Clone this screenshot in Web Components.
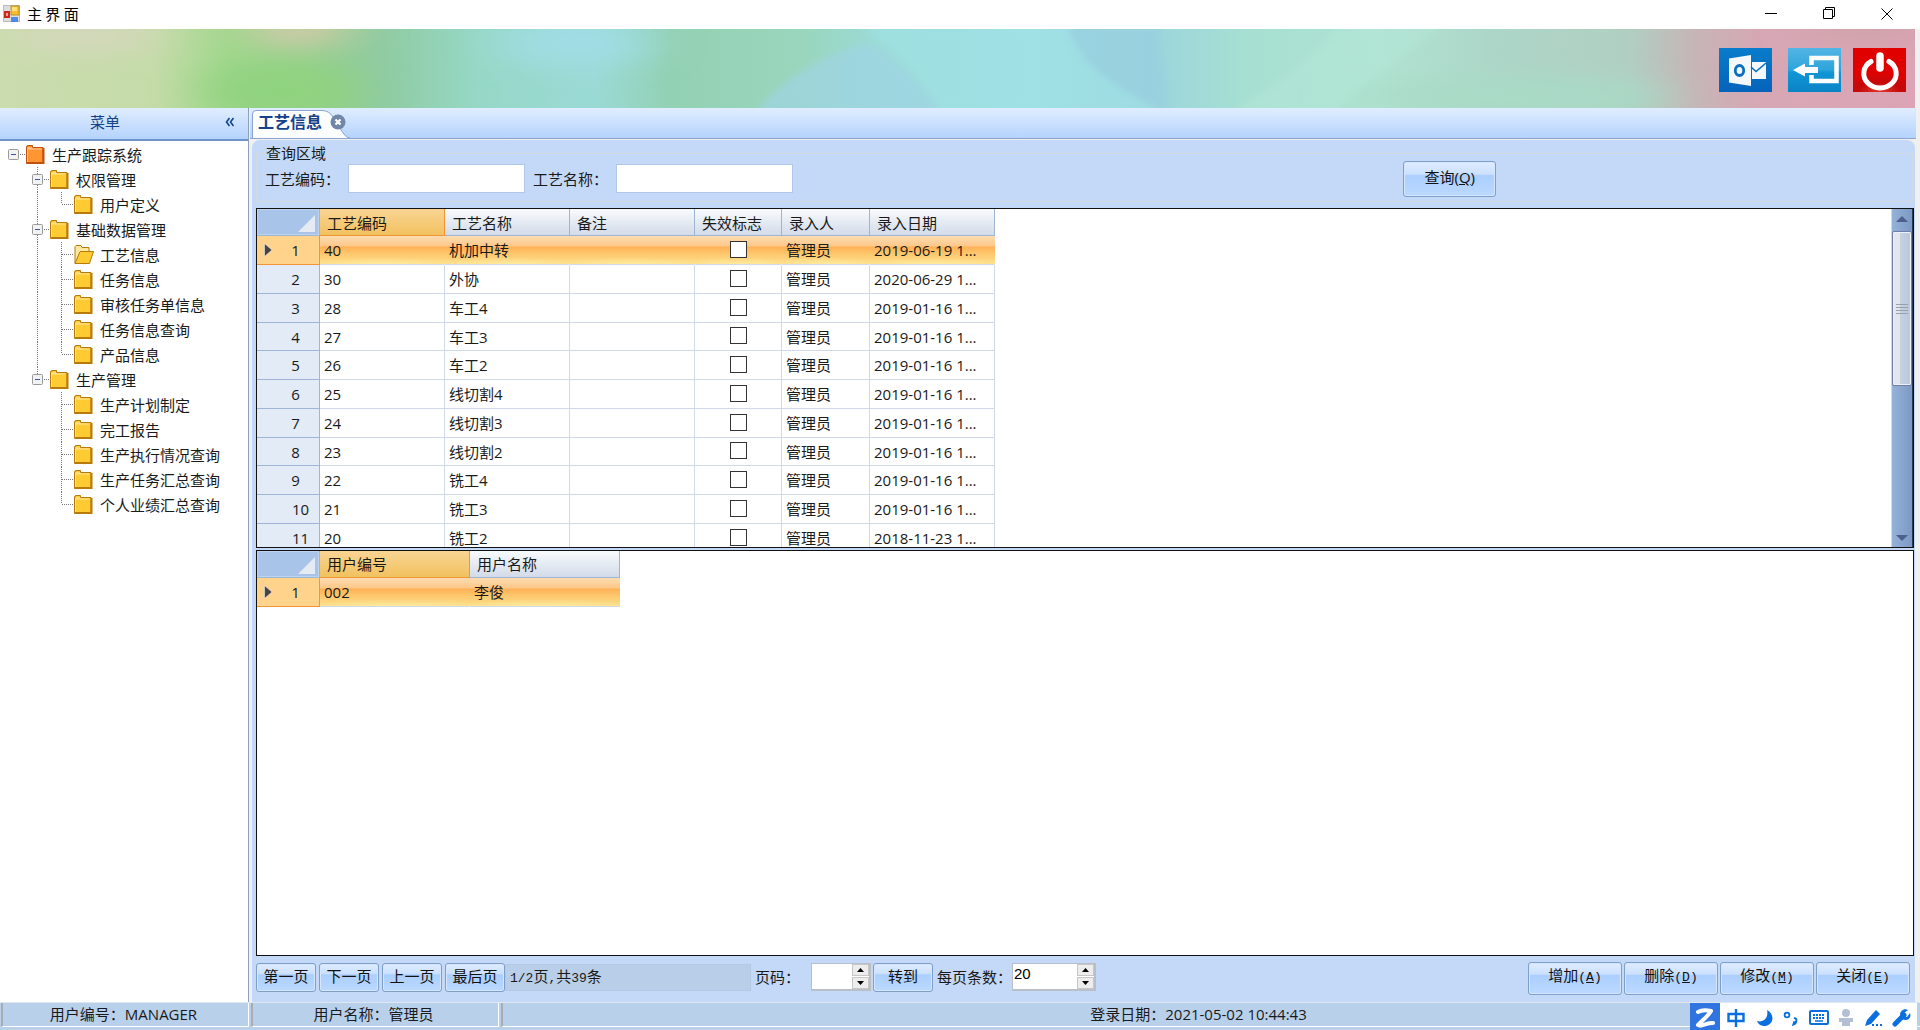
<!DOCTYPE html>
<html lang="zh-CN">
<head>
<meta charset="utf-8">
<title>主界面</title>
<style>
html, body { height: 100%; margin: 0; }
body {
  font: 15px/20px "Open Sans", "Noto Sans CJK SC", sans-serif;
  color: #1a1a1a;
  --panel: #c3d9f7;
  --status: #b9d0ea;
  --ink: #15428b;
}
</style>
</head>
<body>
<main-window></main-window>

<script>
const define = (name, html, setup) => {
  const tpl = document.createElement('template');
  tpl.innerHTML = '<style>*{box-sizing:border-box}:host([hidden]){display:none}</style>' + html;
  customElements.define(name, class extends HTMLElement {
    connectedCallback() {
      if (this.shadowRoot) return;
      this.attachShadow({ mode: 'open' }).append(tpl.content.cloneNode(true));
      if (setup) setup(this, this.shadowRoot);
    }
  });
};

define('title-bar', `
<style>
:host { display: flex; align-items: center; height: 29px; background: #fff; color: #000; flex: none; padding-bottom: 2px; box-sizing: border-box; }
svg { display: block; }
.logo { margin: 0 6px 0 3px; }
span { flex: 1; font-family: "Noto Sans CJK SC", sans-serif; }
button { width: 58px; height: 27px; padding: 0; border: 0; background: none; display: grid; place-items: center; }
.ctl { display: flex; padding-right: 4px; }
</style>
<svg class="logo" width="18" height="18" viewBox="0 0 18 18">
  <rect x=".5" y=".5" width="16" height="16" fill="#ddd" stroke="#bbb"/>
  <rect x="1" y="6" width="6" height="7" fill="#c62a1c"/><rect x="3" y="8" width="2" height="3" fill="#f6a48f"/>
  <rect x="8" y="1" width="8" height="9" fill="#f5c02a" stroke="#b88411" stroke-width=".8"/><rect x="9" y="2" width="5" height="4" fill="#ffe27a"/>
  <rect x="8" y="12" width="7" height="5" fill="#4f8ae6"/>
</svg>
<span>主 界 面</span>
<div class="ctl">
  <button aria-label="最小化"><svg width="12" height="12"><path d="M0 5.500h12" stroke="#000"/></svg></button>
  <button aria-label="还原"><svg width="13" height="13" fill="none" stroke="#000"><path d="M.5 2.500h9v9h-9zM2.500 2.500v-2h9v9h-2"/></svg></button>
  <button aria-label="关闭"><svg width="12" height="12" stroke="#000"><path d="M.5.5l11 11M11.500.5l-11 11"/></svg></button>
</div>`);

define('app-banner', `
<style>
:host { display: grid; height: 79px; margin-right: 5px; flex: none; overflow: hidden; }
:host > * { grid-area: 1 / 1; }
.bg { grid-area: 1 / 1; width: 100%; height: 79px; display: block; }
nav { grid-area: 1 / 1; z-index: 1; display: flex; justify-content: flex-end; align-items: center; padding: 2px 9px 0 0; }
button { padding: 0; border: 0; background: none; display: block; width: 53px; height: 44px; }
button + button { margin-left: 12px; }
.first { margin-right: 4px; }
button svg { display: block; width: 53px; height: 44px; }
</style>
<svg class="bg" viewBox="0 0 1568 79" preserveAspectRatio="none">
  <defs>
    <linearGradient id="b">
      <stop offset="0" stop-color="#cbdcae"/><stop offset=".08" stop-color="#c5dba9"/>
      <stop offset=".12" stop-color="#a0d78c"/><stop offset=".17" stop-color="#92ce92"/>
      <stop offset=".2" stop-color="#8fcba2"/><stop offset=".25" stop-color="#96d8c6"/>
      <stop offset=".31" stop-color="#9adad6"/><stop offset=".35" stop-color="#93d1b4"/>
      <stop offset=".42" stop-color="#99d6bd"/><stop offset=".46" stop-color="#9cdbd8"/>
      <stop offset=".54" stop-color="#9ee0e4"/><stop offset=".6" stop-color="#9bd5dd"/>
      <stop offset=".65" stop-color="#a6dfd2"/><stop offset=".72" stop-color="#b0e3d2"/>
      <stop offset=".78" stop-color="#add6c8"/><stop offset=".85" stop-color="#b0cfc2"/>
      <stop offset=".885" stop-color="#c6b5b6"/><stop offset=".92" stop-color="#d7a7b4"/>
      <stop offset="1" stop-color="#dca4b6"/>
    </linearGradient>
    <filter id="s" x="-80%" y="-80%" width="260%" height="260%"><feGaussianBlur stdDeviation="22 12"/></filter>
    <filter id="t" x="-10%" y="-10%" width="120%" height="120%"><feGaussianBlur stdDeviation="3"/></filter>
  </defs>
  <rect width="1568" height="79" fill="url(#b)"/>
  <g filter="url(#s)">
    <ellipse cx="245" cy="0" rx="42" ry="18" fill="#d2cba8"/>
    <ellipse cx="70" cy="6" rx="60" ry="18" fill="#d4d8bc"/>
    <ellipse cx="230" cy="62" rx="60" ry="30" fill="#90d37f"/>
    <ellipse cx="470" cy="14" rx="60" ry="24" fill="#a0dde4"/>
    <ellipse cx="1240" cy="68" rx="130" ry="18" fill="#a8dbc6"/>
    <ellipse cx="1530" cy="0" rx="50" ry="8" fill="#c8a0a0"/>
  </g>
  <g filter="url(#t)">
    <path d="M620 82C640 50 675 25 710 14C735 30 755 55 770 82z" fill="#9dd4e2" opacity=".75"/>
    <path d="M705 -3C730 20 755 45 770 82H950C915 60 885 35 875 -3z" fill="#a0e1e5" opacity=".55"/>
    <path d="M875 -3C880 35 920 65 955 82C960 45 945 20 950 -3z" fill="#98cfdf" opacity=".75"/>
    <path d="M1010 82C1050 50 1080 25 1095 -3H1180C1155 25 1110 55 1095 82z" fill="#b3e8d8" opacity=".5"/>
  </g>
</svg>
<nav>
  <button class="first" aria-label="邮件"><svg viewBox="0 0 53 44">
    <defs><linearGradient id="o" x2="0" y2="1"><stop stop-color="#087cca"/><stop offset="1" stop-color="#0563bb"/></linearGradient></defs>
    <rect width="53" height="44" fill="url(#o)"/>
    <path d="M10 10.500l22-3.500v31l-22-3.500z" fill="#f4f8fc"/><ellipse cx="20.500" cy="22.500" rx="4.200" ry="5" fill="none" stroke="#0a6fc2" stroke-width="2.800"/>
    <path d="M33 14h14v17H33z" fill="#f4f8fc"/><path d="M32 19l5 4.500L47 15" fill="none" stroke="#0a6fc2" stroke-width="1.600"/>
  </svg></button>
  <button aria-label="注销"><svg viewBox="0 0 53 44">
    <defs><linearGradient id="e" x2="0" y2="1"><stop stop-color="#53b5e4"/><stop offset=".5" stop-color="#2da4dc"/><stop offset=".55" stop-color="#1196d6"/><stop offset="1" stop-color="#0a83c6"/></linearGradient></defs>
    <rect width="53" height="44" fill="url(#e)"/>
    <path d="M23.500 17V10h25v23h-25V27" fill="none" stroke="#fff" stroke-width="4.500"/>
    <path d="M5 22l12-6.500v3.500h13v6H17v3.500z" fill="#fff"/>
  </svg></button>
  <button aria-label="退出"><svg viewBox="0 0 53 44">
    <defs><radialGradient id="p" cx=".5" cy=".9" r=".8"><stop stop-color="#e03a2c"/><stop offset=".5" stop-color="#c40808"/><stop offset="1" stop-color="#d90505"/></radialGradient></defs>
    <rect width="53" height="44" fill="#e00000"/><path d="M0 30Q26 20 53 30V44H0z" fill="url(#p)"/>
    <path d="M18 13.500A16.200 14.500 0 1 0 36 13.500" fill="none" stroke="#fff" stroke-width="5" stroke-linecap="round"/>
    <path d="M27 8v12" stroke="#fff" stroke-width="7.500" stroke-linecap="round"/>
  </svg></button>
</nav>`);

define('tree-item', `
<style>
:host { display: flex; align-items: center; height: 25px; padding-left: 2px; white-space: nowrap; }
svg { display: block; flex: none; }
a { color: inherit; text-decoration: none; padding-left: 6px; }
.g { display: flex; }
</style><div class="g"></div><a href="#"><slot></slot></a>`, (host, root) => {
  const dot = d => `<path d="${d}" stroke="#777" stroke-dasharray="1 1"/>`;
  const cells = {
    ' ': '',
    'v': dot('M11.5 0V25'),
    't': dot('M11.5 0V25M12 12.5H24'),
    'l': dot('M11.5 0V12M12 12.5H24'),
    'R': dot('M18 12.5H24') + 'B',
    'B': dot('M11.5 0V25M18 12.5H24') + 'B',
    'E': dot('M11.5 0V8M18 12.5H24') + 'B'
  };
  const box = '<rect x="6.5" y="7.5" width="10" height="10" rx="1" fill="#f2f2f2" stroke="#9a9a9a"/><path d="M9 12.5h5" stroke="#3b55a5"/>';
  const svg = [...host.getAttribute('lines')].map(c =>
    `<svg width="24" height="25" fill="none">${cells[c].replace('B', box)}</svg>`).join('');
  const kind = host.getAttribute('icon');
  const [fill, edge] = kind === 'root' ? ['#ff9633', '#c04f10'] : ['#ffcb33', '#b87a0c'];
  const folder = kind === 'open'
    ? `<path d="M1 19.500V2.500l1-1h5l1 2h7v4" fill="#ffe9a0" stroke="${edge}"/><path d="M1 19.500l5-12h13.500l-4 12z" fill="${fill}" stroke="${edge}"/>`
    : `<path d="M.5 19.500v-17h1v-1h5v2h10.500v16z" fill="${fill}" stroke="${edge}"/><path d="M1.500 4h5M1.500 18V5h14" fill="none" stroke="#fff" opacity=".5"/><path d="M1 19h16.500V4" fill="none" stroke="${edge}" stroke-width="2"/>`;
  root.querySelector('.g').innerHTML = svg + `<svg width="20" height="25" viewBox="0 -2 20 25">${folder}</svg>`;
});

define('side-menu', `
<style>
:host { display: flex; flex-direction: column; width: 249px; flex: none; background: #fff; border-right: 1px solid #8c9fbb; }
header { display: flex; align-items: center; height: 33px; padding: 0 10px 3px 0; color: var(--ink);
  background: linear-gradient(#e0edff, #b5d3fd); border-bottom: 2px solid #6f93c6; }
h2 { flex: 1; margin: 0; padding-right: 12px; text-align: center; font: inherit; }
button { border: 0; background: none; padding: 0; width: 16px; height: 20px; display: grid; place-items: center; }
.tree { padding-top: 1px; flex: 1; }
</style>
<header><h2>菜单</h2><button aria-label="收起"><svg width="10" height="10" fill="none" stroke="#15428b" stroke-width="1.600"><path d="M4.500 1L1.500 5l3 4M8.500 1l-3 4 3 4"/></svg></button></header>
<nav class="tree"><slot></slot></nav>`);

define('tab-strip', `
<style>
:host { display: flex; align-items: flex-end; height: 31px; flex: none; padding-left: 2px;
  background: linear-gradient(#e0edff, #b5d3fd); border-bottom: 1px solid #8ba4cf; }
.tab { display: grid; height: 28px; width: 116px; }
.tab > * { grid-area: 1 / 1; }
.in { display: flex; align-items: center; padding: 0 0 4px 6px; font-weight: bold; font-size: 16px; color: var(--ink); }
button { border: 0; padding: 0; margin-left: 8px; background: none; width: 16px; height: 16px; }
svg { display: block; }
</style>
<div class="tab">
  <svg width="116" height="28"><path d="M.5 29V4Q.5.500 4 .5H70Q77 .500 81 7L91 23Q94 28 99 28.500" fill="#fcfdff" stroke="#8ba4cf"/></svg>
  <div class="in"><span>工艺信息</span><button aria-label="关闭标签"><svg width="16" height="16"><circle cx="8" cy="8" r="7.500" fill="#7186a8"/><path d="M5.500 5.500l5 5M10.500 5.500l-5 5" stroke="#fff" stroke-width="2.200"/></svg></button></div>
</div>`);

define('ui-button', `
<style>
:host { display: block; flex: none; width: 60px; height: 29px; }
button { width: 100%; height: 100%; padding: 0 0 3px; font: inherit; color: #111; white-space: nowrap;
  border: 1px solid #7f9fcb; border-radius: 3px; box-shadow: inset 0 0 0 1px #d6e6fc;
  background: linear-gradient(#dfecff 0%, #cbe0ff 36%, #abcfff 40%, #bcd9ff 100%); }
</style><button type="button"><slot></slot></button>`);

define('query-panel', `
<style>
:host { display: block; flex: none; margin: 0 1px 0 0; }
fieldset { display: flex; align-items: center; margin: 0; min-width: 0; height: 59px; padding: 0 0 7px 8px; border: 1px solid #d3d9e0; }
legend { padding: 0 1px; margin: 0; line-height: 20px; }
input { width: 177px; height: 29px; border: 1px solid #afc8ea; background: #fff; font: inherit; padding: 0 6px; margin: 0 8px 0 7px; flex: none; }
label { flex: none; width: 76px; white-space: nowrap; }
ui-button { width: 93px; height: 36px; margin-left: auto; margin-right: calc(25% + 4px); }
</style>
<fieldset><legend>查询区域</legend>
<label for="code">工艺编码：</label><input id="code">
<label for="name">工艺名称：</label><input id="name">
<ui-button>查询(<u>Q</u>)</ui-button>
</fieldset>`);

define('scroll-track', `
<style>
:host { display: flex; flex-direction: column; align-items: center; width: 22px; flex: none; box-sizing: border-box;
  background: linear-gradient(90deg, #95b2d9, #7b99c2); border-left: 1px solid #c5dcf8; border-right: 1px solid #2b3a50; }
i { border: 6px solid transparent; flex: none; }
.u { border-top: 0; border-bottom-color: #4e5f8b; margin: 7px 0 9px; }
.d { border-bottom: 0; border-top-color: #4e5f8b; margin: auto 0 6px; }
.thumb { width: 20px; height: 46%; display: grid; place-items: center; border: 1px solid #6f7fa8; border-radius: 2px;
  box-shadow: inset 0 0 0 1px #eef2f8; background: linear-gradient(90deg, #e2e7ef 38%, #c5d2e2 40%, #b9c7dc); }
</style><i class="u"></i><div class="thumb"><svg width="12" height="10" stroke="#9a9fa8"><path d="M0 .5h12M0 3.500h12M0 6.500h12M0 9.500h12"/></svg></div><i class="d"></i>`);

define('data-grid', `
<style>
:host { display: flex; min-height: 0; overflow: hidden; background: #fff; border: 1px solid #111; }
.view { flex: 1; min-width: 0; overflow: hidden; }
table { table-layout: fixed; border-collapse: separate; border-spacing: 0; width: 0; line-height: 16px; }
th, td { height: 29px; padding: 0; font-weight: normal; text-align: left; white-space: nowrap;
  border-right: 1px solid #d0d9ea; border-bottom: 1px solid #d0d9ea; }
/* rows average a little under 29px */
tbody tr:nth-child(4n) > * { height: 28px; }
td { padding-left: 4px; }
thead th { height: 27px; padding: 1px 0 0 7px; background: linear-gradient(#f8fbfd, #d3dbe9); border-color: #9db6d6; }
thead th.sel { background: linear-gradient(#f9d594, #f2c15f); border-color: #f29536; }
thead th.corner { padding: 0; background: #a9c4e9; box-shadow: inset 0 0 0 1px #bed3ef; }
thead th.corner svg { display: block; margin-left: 41px; margin-top: 3px; }
tbody th { background: #e3ebf6; border-color: #9db6d6; }
tbody th div { display: flex; align-items: center; padding-left: 7px; }
tbody th span { width: 22px; margin-left: 12px; padding-right: 1px; text-align: center; }
tbody th svg { width: 9px; display: block; }
tbody th.two span { width: 32px; }
tr.cur td { border-right-color: transparent; background: radial-gradient(ellipse 70% 26% at 50% 100%, #ffeb9e, #ffe69600), linear-gradient(#fcdcb0 0%, #fdc88a 34%, #ffb257 38%, #fecb72 66%, #fddf8c 100%); background-clip: border-box; background-origin: border-box; }
tr.cur th { background: #ffd38c; border-color: #f29536; }
td.c { text-align: center; padding: 0; }
input { appearance: none; display: block; width: 17px; height: 17px; margin: 0 auto 2px; border: 1px solid #333; background: #fff; }
</style><div class="view"><table></table></div>`, (host, root) => {
  const cols = JSON.parse(host.getAttribute('columns'));
  const rows = JSON.parse(host.getAttribute('rows'));
  const table = root.querySelector('table');
  const cell = v => v === false ? '<td class="c"><input type="checkbox" aria-label="失效标志"></td>' : `<td>${v}</td>`;
  table.innerHTML = `<colgroup><col style="width:63px">${cols.map(c => `<col style="width:${c[1]}px">`).join('')}</colgroup>
    <thead><tr><th class="corner"><svg width="18" height="17"><path d="M17 0V17H0z" fill="#e6eaf2"/></svg></th>${cols.map((c, i) => `<th class="${i ? '' : 'sel'}">${c[0]}</th>`).join('')}</tr></thead>
    <tbody>${rows.map((r, i) => `<tr class="${i ? '' : 'cur'}"><th class="${i > 8 ? 'two' : ''}"><div><svg width="9" height="14">${i ? '' : '<path d="M.5 .5v13l7.5-6.5z" fill="#444" stroke="#eee" stroke-width=".6"/>'}</svg><span>${i + 1}</span></div></th>${r.map(cell).join('')}</tr>`).join('')}</tbody>`;
  if (host.hasAttribute('scroll')) root.append(document.createElement('scroll-track'));
});

define('number-box', `
<style>
:host { display: flex; flex: none; height: 28px; background: #fff; border: 1px solid #b8bfc8; border-right-width: 2px; border-bottom-width: 2px; box-sizing: border-box; }
input { flex: 1; min-width: 0; border: 0; padding: 0 0 6px 1px; font: 15px/20px "Liberation Sans", sans-serif; background: none; appearance: textfield; }
input::-webkit-inner-spin-button { display: none; }
div { display: flex; flex-direction: column; width: 17px; gap: 1px; }
button { flex: 1; padding: 0; border: 1px solid #c6c6c6; background: #ededed; display: grid; place-items: center; }
svg { display: block; }
</style>
<input type="number"><div>
<button tabindex="-1" aria-label="增大"><svg width="7" height="4"><path d="M0 4L3.500 0 7 4z"/></svg></button>
<button tabindex="-1" aria-label="减小"><svg width="7" height="4"><path d="M0 0h7L3.500 4z"/></svg></button></div>`, (host, root) => {
  const input = root.querySelector('input');
  input.value = host.getAttribute('value') || '';
  input.setAttribute('aria-label', host.getAttribute('label'));
});

define('pager-bar', `
<style>
:host { display: flex; align-items: center; height: 46px; flex: none; padding: 0 4px 4px 0; box-sizing: border-box; font-family: "Noto Sans CJK SC", sans-serif; }
.nav { display: flex; gap: 3px; }
output { width: 246px; height: 27px; margin: 0 4px 0 0; padding: 0 4px; line-height: 22px; background: #b9cfe9; border: 1px solid #b3cae6; white-space: nowrap; }
.m { font: 13px/20px "Liberation Mono", monospace; }
label { white-space: nowrap; }
.p { width: 60px; margin: 0 2px 0 11px; }
.n { width: 84px; }
label.s { margin-left: 4px; }
.ops { display: flex; gap: 2px; margin-left: auto; padding-top: 2px; }
.ops ui-button { width: 94px; height: 33px; }
</style>
<div class="nav"><ui-button>第一页</ui-button><ui-button>下一页</ui-button><ui-button>上一页</ui-button><ui-button>最后页</ui-button></div>
<output><span class="m">1/2</span>页<span class="m">,</span>共<span class="m">39</span>条</output>
<label>页码：</label><number-box class="p" label="页码"></number-box>
<ui-button>转到</ui-button>
<label class="s">每页条数：</label><number-box class="n" label="每页条数" value="20"></number-box>
<div class="ops">
<ui-button>增加<span class="m">(<u>A</u>)</span></ui-button><ui-button>删除<span class="m">(<u>D</u>)</span></ui-button><ui-button>修改<span class="m">(<u>M</u>)</span></ui-button><ui-button>关闭<span class="m">(<u>E</u>)</span></ui-button>
</div>`);

define('status-bar', `
<style>
:host { display: flex; gap: 2px; height: 28px; flex: none; padding: 0 0 3px 1px; box-sizing: border-box; background: var(--status); border-top: 1px solid #dfe7f1; }
div { width: 248px; padding-right: 4px; text-align: center; line-height: 22px; border-left: 2px solid #a9adb3; border-right: 1px solid #fff; border-bottom: 1px solid #fff; white-space: nowrap; }
div:last-child { flex: 1; padding-right: 26px; border-right: 0; }
</style>
<div>用户编号：MANAGER</div><div>用户名称：管理员</div><div>登录日期：2021-05-02 10:44:43</div>`);

define('ime-bar', `
<style>
:host { position: absolute; right: 3px; bottom: 0; display: flex; align-items: center; width: 227px; height: 27px; background: #fff; overflow: hidden; color: #0b6fe0; }
svg { display: block; flex: none; }
</style>
<svg width="227" height="27" fill="none" stroke="#0b6fe0">
  <path d="M0 0h30v27H0z" fill="#2f74e0" stroke="none"/>
  <path d="M8 9c5-3 9-2 13-1c-3 5-8 9-13 14c4 3 7-3 15-2" stroke="#fff" stroke-width="4" stroke-linecap="round" stroke-linejoin="round"/>
  <path d="M38.500 11h15v7h-15zM46 6v18" stroke-width="2.400"/>
  <path d="M77 7c8 4 7 15-2 16c-4 0-7-2-8-5c6 2 12-3 10-11z" fill="#0b6fe0" stroke="none"/>
  <circle cx="97" cy="12" r="2.400" stroke-width="1.800"/><path d="M105 15a2 2 0 1 1-1 4l-1 3c4-1 5-6 1-7z" fill="#0b6fe0" stroke-width="1.500"/>
  <rect x="120" y="8" width="18" height="13" rx="1" stroke-width="2"/><path d="M123 12h12M123 15h12" stroke-width="2" stroke-dasharray="2 1"/><path d="M125 18h8" stroke-width="1.500"/>
  <g fill="#b4bfd3" stroke="none"><circle cx="156" cy="10" r="4"/><path d="M149 15h14v4h-3v4h-8v-4h-3z"/></g>
  <path d="M175 23l2-6 9-10 4 4-9 10z" fill="#0b6fe0" stroke="none"/><path d="M182 22h10" stroke-width="2" stroke-dasharray="2 2"/>
  <path d="M205 21l9-9" stroke-width="5" stroke-linecap="round"/><path d="M218 7l-4 3v3l3 1 3-4c2 5-3 9-8 6l-2-4c0-4 4-7 8-5z" fill="#0b6fe0" stroke="none"/>
</svg>`);

define('main-window', `
<style>
:host { display: flex; flex-direction: column; height: 100vh; min-height: 600px; background: #f0f0f0; position: relative; overflow: hidden; }
.body { flex: 1; display: flex; min-height: 0; }
main { flex: 1; display: flex; flex-direction: column; min-width: 0; margin: 0 4px 0 1px; }
.page { flex: 1; display: flex; flex-direction: column; min-height: 0; margin: 1px 1px 0 2px; padding: 3px 1px 0 4px; background: var(--panel); border-radius: 8px 8px 0 0; }
.top { flex: 339 1 0; margin-top: 6px; }
.bottom { flex: 406 1 0; margin-top: 2px; }
</style>
<title-bar></title-bar>
<app-banner></app-banner>
<div class="body">
  <side-menu>
    <tree-item lines="R" icon="root">生产跟踪系统</tree-item>
    <tree-item lines=" B">权限管理</tree-item>
    <tree-item lines=" vl">用户定义</tree-item>
    <tree-item lines=" B">基础数据管理</tree-item>
    <tree-item lines=" vt" icon="open">工艺信息</tree-item>
    <tree-item lines=" vt">任务信息</tree-item>
    <tree-item lines=" vt">审核任务单信息</tree-item>
    <tree-item lines=" vt">任务信息查询</tree-item>
    <tree-item lines=" vl">产品信息</tree-item>
    <tree-item lines=" E">生产管理</tree-item>
    <tree-item lines="  t">生产计划制定</tree-item>
    <tree-item lines="  t">完工报告</tree-item>
    <tree-item lines="  t">生产执行情况查询</tree-item>
    <tree-item lines="  t">生产任务汇总查询</tree-item>
    <tree-item lines="  l">个人业绩汇总查询</tree-item>
  </side-menu>
  <main>
    <tab-strip></tab-strip>
    <div class="page">
      <query-panel></query-panel>
      <data-grid class="top" scroll
        columns='[["工艺编码",125],["工艺名称",125],["备注",125],["失效标志",87],["录入人",88],["录入日期",125]]'
        rows='[["40","机加中转","",false,"管理员","2019-06-19 1..."],["30","外协","",false,"管理员","2020-06-29 1..."],["28","车工4","",false,"管理员","2019-01-16 1..."],["27","车工3","",false,"管理员","2019-01-16 1..."],["26","车工2","",false,"管理员","2019-01-16 1..."],["25","线切割4","",false,"管理员","2019-01-16 1..."],["24","线切割3","",false,"管理员","2019-01-16 1..."],["23","线切割2","",false,"管理员","2019-01-16 1..."],["22","铣工4","",false,"管理员","2019-01-16 1..."],["21","铣工3","",false,"管理员","2019-01-16 1..."],["20","铣工2","",false,"管理员","2018-11-23 1..."]]'></data-grid>
      <data-grid class="bottom" columns='[["用户编号",150],["用户名称",150]]' rows='[["002","李俊"]]'></data-grid>
      <pager-bar></pager-bar>
    </div>
  </main>
</div>
<status-bar></status-bar>
<ime-bar></ime-bar>`);
</script>
</body>
</html>
